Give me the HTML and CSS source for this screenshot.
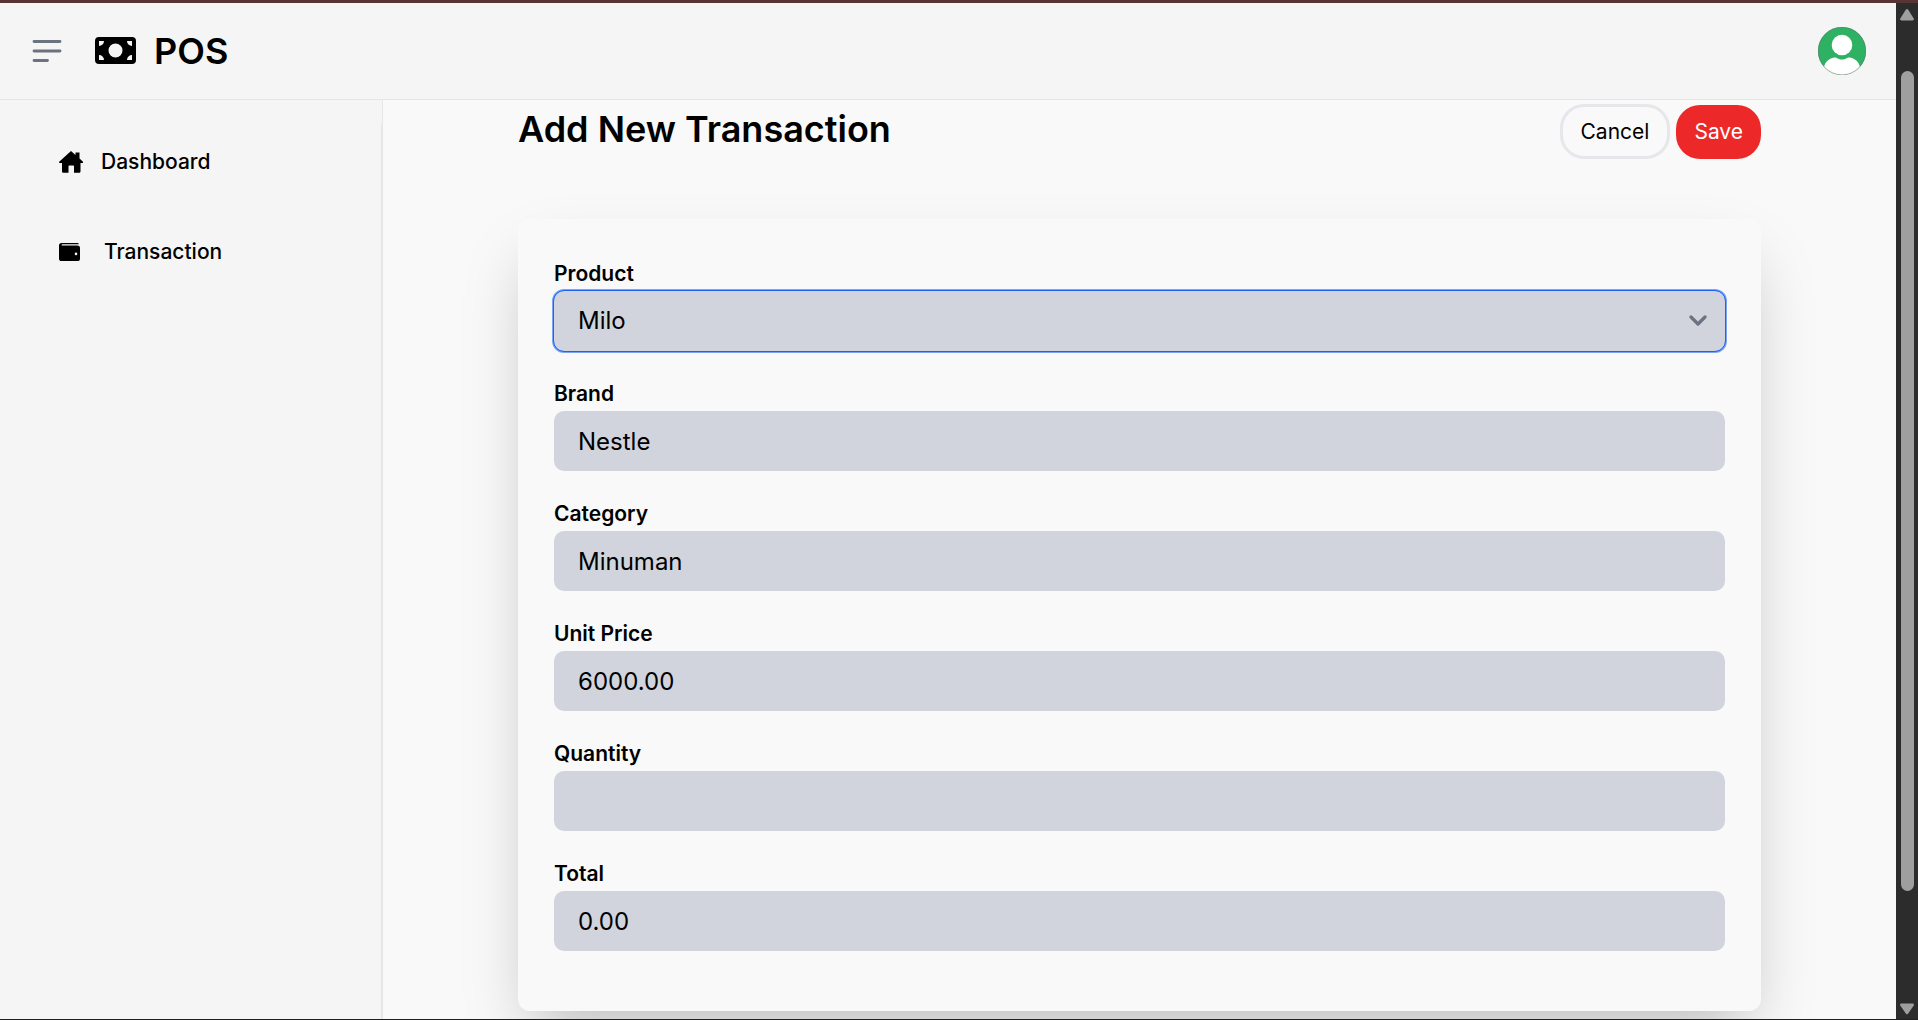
FILE: index.html
```html
<!DOCTYPE html>
<html lang="en">
<head>
<meta charset="utf-8">
<meta name="viewport" content="width=device-width, initial-scale=1">
<title>POS</title>
<link rel="stylesheet" href="styles.css">
</head>
<body>
<div class="window">
  <div class="page">
    <header class="topbar">
      <button class="menu-button" type="button" aria-label="Toggle menu">
        <svg width="30" height="24" viewBox="0 0 30 24" fill="none" stroke="currentColor" stroke-width="2.8" stroke-linecap="round"><path d="M2 2.500h26M2 12h26M2 21.500h13.500"/></svg>
      </button>
      <a class="brand" href="#">
        <svg width="41" height="28" viewBox="0 0 41 28"><path fill="currentColor" fill-rule="evenodd" d="M4 0h33a4 4 0 0 1 4 4v19a4 4 0 0 1-4 4H4a4 4 0 0 1-4-4V4a4 4 0 0 1 4-4zM4 4v5a5 5 0 0 0 5-5zM37 4h-5a5 5 0 0 0 5 5zM4 23h5a5 5 0 0 0-5-5zM37 23v-5a5 5 0 0 0-5 5zM20.500 6.500a7 7 0 1 0 0 14 7 7 0 0 0 0-14z"/></svg>
        <span>POS</span>
      </a>
      <button class="avatar" type="button" aria-label="Account">
        <svg width="48" height="48" viewBox="0 0 48 48"><defs><clipPath id="disc"><circle cx="24" cy="24" r="24"/></clipPath></defs><g clip-path="url(#disc)"><path fill="#2fb163" d="M0 0h48v48H0z"/><circle cx="24" cy="18" r="10.300" fill="#fff"/><path fill="#fff" d="M6 48V40c1-5 5-9 11-9.500 2 0 3 2 7 2s5-2 7-2c6 .5 10 4.500 11 9.500v8z"/></g><circle cx="24" cy="24" r="23.800" fill="none" stroke="#555" stroke-width=".4"/></svg>
      </button>
    </header>
    <div class="body">
      <aside class="sidebar">
        <nav class="nav">
          <a class="nav-link" href="#">
            <svg width="24" height="22" viewBox="0 0 24 22" fill="currentColor"><path d="M12 0l4.500 4V1.500h4V7.600L24 10.700c.4.600 0 1.300-.8 1.300H21.500v8.200c0 1-.6 1.600-1.600 1.600H15V15.500c0-.6-.4-1-1-1h-3.500c-.6 0-1 .4-1 1v6.300H4.600c-1 0-1.600-.6-1.600-1.600V12H.8C0 12-.3 11.300.2 10.700z"/></svg>
            <span>Dashboard</span>
          </a>
          <a class="nav-link nav-link-wide" href="#">
            <svg width="21" height="19" viewBox="0 0 21 19"><path fill="currentColor" fill-rule="evenodd" d="M2.600 0H18.500a1.300 1.300 0 0 1 1.300 1.300H3.300a.6.600 0 0 0 0 1.300H18.500A2.500 2.500 0 0 1 21 5.100v10.400a2.600 2.600 0 0 1-2.600 2.600H2.600A2.600 2.600 0 0 1 0 15.500V2.600A2.600 2.600 0 0 1 2.600 0zM17 9.600a1.300 1.300 0 1 0 0 2.600 1.300 1.300 0 0 0 0-2.600z"/></svg>
            <span>Transaction</span>
          </a>
        </nav>
      </aside>
      <main class="main">
        <form class="form" onsubmit="return false">
          <div class="heading">
            <h1 class="title">Add New Transaction</h1>
            <div class="actions">
              <button class="button button-outline" type="button">Cancel</button>
              <button class="button button-primary" type="submit">Save</button>
            </div>
          </div>
          <div class="card">
            <div class="field">
              <label for="product">Product</label>
              <div class="select">
                <select class="control control-focus" id="product"><option>Milo</option></select>
                <svg class="chevron" width="18" height="12" viewBox="0 0 18 12" fill="none" stroke="currentColor" stroke-width="3.200" stroke-linecap="round" stroke-linejoin="round"><path d="M2 2l7 7 7-7"/></svg>
              </div>
            </div>
            <div class="field">
              <label for="brand">Brand</label>
              <input class="control" id="brand" type="text" value="Nestle">
            </div>
            <div class="field">
              <label for="category">Category</label>
              <input class="control" id="category" type="text" value="Minuman">
            </div>
            <div class="field">
              <label for="price">Unit Price</label>
              <input class="control" id="price" type="text" value="6000.00">
            </div>
            <div class="field">
              <label for="quantity">Quantity</label>
              <input class="control" id="quantity" type="text">
            </div>
            <div class="field">
              <label for="total">Total</label>
              <input class="control" id="total" type="text" value="0.00">
            </div>
          </div>
        </form>
      </main>
    </div>
  </div>
  <div class="scrollbar" aria-hidden="true">
    <svg width="14" height="12" viewBox="0 0 14 12" fill="currentColor"><path d="M5.800.8a1.500 1.500 0 0 1 2.400 0l5.500 8.700c.6 1-.1 1.900-1.200 1.900h-11C.4 11.400-.3 10.500.3 9.500z"/></svg>
    <div class="track"><div class="thumb"></div></div>
    <svg width="14" height="12" viewBox="0 0 14 12" fill="currentColor"><path d="M5.800 10.600a1.500 1.500 0 0 0 2.400 0l5.500-8.100c.6-1-.1-1.900-1.200-1.900h-11C.4.600-.3 1.500.3 2.500z"/></svg>
  </div>
</div>
</body>
</html>
```
FILE: styles.css
```css
*, *::before, *::after { box-sizing: border-box; }

body {
  margin: 0;
  font-family: Inter, "Liberation Sans", sans-serif;
  font-size: 21px;
  line-height: 30px;
  color: #000;
  background: #f9f9f9;
}

button, input, select { font: inherit; color: inherit; }
a { color: inherit; text-decoration: none; }
svg { display: block; flex: none; }

.window {
  display: flex;
  height: 100vh;
  border-top: 3px solid #583534;
  border-bottom: 1px solid #202020;
}

.page {
  flex: 1;
  min-width: 0;
  display: flex;
  flex-direction: column;
  overflow: hidden;
}

.topbar {
  flex: none;
  display: flex;
  align-items: center;
  height: 97px;
  padding: 0 30px 0 32px;
  background: #f5f5f5;
  border-bottom: 1px solid #e5e5e5;
}

.menu-button, .avatar {
  padding: 0;
  border: 0;
  background: none;
  cursor: pointer;
}

.menu-button { color: #6b7280; margin-right: 33px; }

.brand {
  display: flex;
  align-items: center;
  gap: 18px;
  font-size: 36px;
  line-height: 50px;
  font-weight: 600;
}

.avatar { margin-left: auto; }

.body { flex: 1; min-height: 0; display: flex; }

.sidebar {
  flex: none;
  display: flex;
  width: 383px;
  padding-top: 23px;
  background: #f5f5f5;
  border-right: 1px solid #e5e7eb;
}

.nav {
  flex: 1;
  display: flex;
  flex-direction: column;
  gap: 60px;
  padding: 24px 59px;
  border-right: 1px solid #e5e7eb;
}

.nav-link {
  display: flex;
  align-items: center;
  gap: 18px;
  font-weight: 500;
}

.nav-link-wide { gap: 24px; }

.main { flex: 1; min-width: 0; padding: 4px 135px 0; }

.heading {
  display: flex;
  justify-content: space-between;
  align-items: flex-start;
  min-height: 115px;
}

.title {
  margin: 0;
  font-size: 36px;
  line-height: 50px;
  font-weight: 600;
}

.actions { display: flex; align-items: flex-end; gap: 6px; }

.button {
  height: 54px;
  padding: 0 18px;
  border: 0;
  border-radius: 24px;
  cursor: pointer;
}

.button-outline { height: 55px; background: #f9f9f9; border: 3px solid #e5e7eb; }
.button-primary { background: #ec2828; color: #fff; }

.card {
  display: flex;
  flex-direction: column;
  gap: 28px;
  padding: 40px 36px 60px;
  border-radius: 12px;
  background: #f9f9f9;
  box-shadow: 0 31px 62px -15px rgba(0, 0, 0, 0.25);
}

.field { display: flex; flex-direction: column; gap: 2px; }
.field label { font-weight: 600; }

.control {
  display: block;
  width: 100%;
  height: 60px;
  padding: 0 24px;
  border: 0;
  border-radius: 10px;
  background: #d1d4dc;
  font-size: 24px;
  appearance: none;
}

.control-focus {
  outline: 1px solid #1f63f0;
  box-shadow: 0 0 0 2px #7ba4f7;
}

.select { display: grid; align-items: center; }
.select > * { grid-area: 1 / 1; }
.chevron { justify-self: end; margin-right: 18px; color: #6b7280; pointer-events: none; }

.scrollbar {
  flex: none;
  display: flex;
  flex-direction: column;
  align-items: center;
  width: 22px;
  padding: 6px 0 4px;
  background: #2c2c2c;
  color: #9f9f9f;
}

.track { flex: 1; padding: 50px 0 0; }
.thumb { width: 13px; height: 88%; border-radius: 7px; background: #9f9f9f; }
```
